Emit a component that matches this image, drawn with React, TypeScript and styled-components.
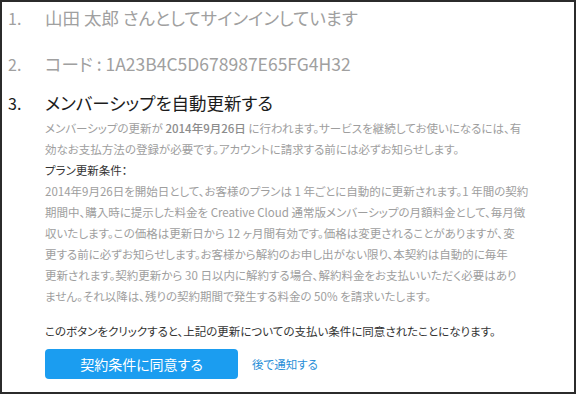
import React from 'react'
import styled, { createGlobalStyle } from 'styled-components'

const GlobalStyle = createGlobalStyle`
  html, body {
    margin: 0;
    padding: 0;
    background: #ffffff;
  }

  body {
    font-family: "Noto Sans CJK JP", "Noto Sans", sans-serif;
    font-feature-settings: "palt";
  }
`

const Frame = styled.div`
  background: #ffffff;
  border: 2px solid #2b2b2b;
  box-sizing: border-box;
  height: 394px;
  overflow: hidden;
  padding: 3px 0 0 6px;
  width: 576px;
`

type TStepParams = {
  active?: boolean
  space?: number
}

const Step = styled.div<TStepParams>`
  align-items: baseline;
  color: ${({ active }) => active ? '#1c1c1c' : '#a0a0a0'};
  display: flex;
  font-size: 17.5px;
  line-height: 26px;
  margin-bottom: ${({ space = 0 }) => `${space}px`};
`

const Num = styled.span`
  flex: 0 0 37px;
  font-size: 16px;
`

const Details = styled.div`
  padding: 2px 0 0 37px;
`

type TParaParams = {
  strong?: boolean
}

const Para = styled.p<TParaParams>`
  color: ${({ strong }) => strong ? '#333333' : '#9e9e9e'};
  font-size: 11.5px;
  line-height: 21px;
  margin: 0;
  white-space: nowrap;
`

const Confirm = styled(Para)`
  margin: 14px 0 7px;
`

const Date = styled.span`
  color: #8c8c8c;
  font-weight: 500;
`

const Actions = styled.div`
  align-items: center;
  display: flex;
  gap: 14px;
`

const Agree = styled.button`
  background: #1b9df0;
  border: 0;
  border-radius: 4px;
  color: #ffffff;
  cursor: pointer;
  font-family: inherit;
  font-feature-settings: "palt";
  font-size: 14px;
  height: 30px;
  padding: 0;
  width: 193px;
`

const Later = styled.a`
  color: #2a8fd8;
  font-size: 11.5px;
  text-decoration: none;
`

const App = () => (
  <>
    <GlobalStyle />
    <Frame>
      <Step space={20}>
        <Num>1.</Num>
        <span>山田 太郎 さんとしてサインインしています</span>
      </Step>
      <Step space={13}>
        <Num>2.</Num>
        <span>コード : 1A23B4C5D678987E65FG4H32</span>
      </Step>
      <Step active>
        <Num>3.</Num>
        <span>メンバーシップを自動更新する</span>
      </Step>

      <Details>
        <Para>
          メンバーシップの更新が <Date>2014年9月26日</Date> に行われます。サービスを継続してお使いになるには、有<br />
          効なお支払方法の登録が必要です。アカウントに請求する前には必ずお知らせします。
        </Para>

        <Para strong>プラン更新条件：</Para>
        <Para>
          2014年9月26日を開始日として、お客様のプランは 1 年ごとに自動的に更新されます。1 年間の契約<br />
          期間中、購入時に提示した料金を Creative Cloud 通常版メンバーシップの月額料金として、毎月徴<br />
          収いたします。この価格は更新日から 12 ヶ月間有効です。価格は変更されることがありますが、変<br />
          更する前に必ずお知らせします。お客様から解約のお申し出がない限り、本契約は自動的に毎年<br />
          更新されます。契約更新から 30 日以内に解約する場合、解約料金をお支払いいただく必要はあり<br />
          ません。それ以降は、残りの契約期間で発生する料金の 50% を請求いたします。
        </Para>

        <Confirm strong>このボタンをクリックすると、上記の更新についての支払い条件に同意されたことになります。</Confirm>

        <Actions>
          <Agree>契約条件に同意する</Agree>
          <Later href="#later">後で通知する</Later>
        </Actions>
      </Details>
    </Frame>
  </>
)

export default App
